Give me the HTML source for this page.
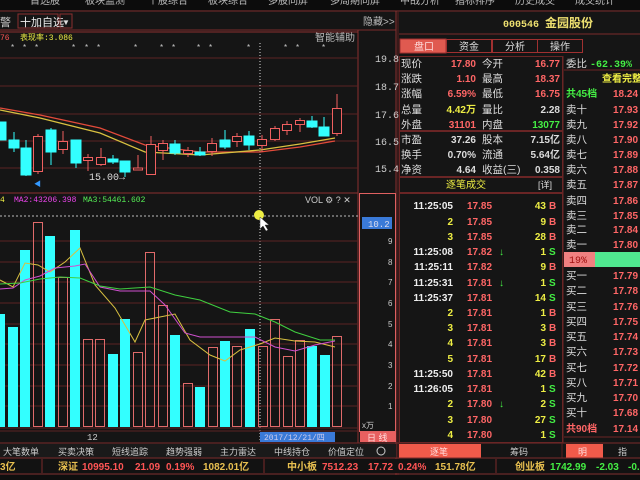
<!DOCTYPE html>
<html><head><meta charset="utf-8"><style>
html,body{margin:0;padding:0;background:#141414;width:640px;height:480px;overflow:hidden}
svg{display:block}
text{font-family:"Liberation Sans","Noto Sans CJK SC",sans-serif}
.m{font-family:"Liberation Mono","Noto Sans CJK SC",monospace}
</style></head><body>
<svg width="640" height="480" viewBox="0 0 640 480" xmlns="http://www.w3.org/2000/svg">
<rect width="640" height="480" fill="#151515"/>
<rect x="0" y="0" width="640" height="10" fill="#0c0c0c"/>
<g fill="#bbb" font-size="10">
<text x="30" y="4">首选股</text><text x="85" y="4">板块监测</text><text x="148" y="4">个股综合</text><text x="208" y="4">板块综合</text><text x="268" y="4">多股同屏</text><text x="330" y="4">多周期同屏</text><text x="400" y="4">中战分析</text><text x="455" y="4">指标排序</text><text x="515" y="4">历史成交</text><text x="575" y="4">成交统计</text>
</g>
<line x1="0" y1="11" x2="640" y2="11" stroke="#7a2a2a"/>
<text x="0" y="26" font-size="11" fill="#ccc">警</text>
<rect x="18" y="14" width="40" height="14" fill="none" stroke="#8a3030"/>
<text x="20" y="26" font-size="11" fill="#eee">十加自选</text>
<rect x="60" y="14" width="12" height="14" fill="none" stroke="#8a3030"/>
<text x="62" y="25" font-size="8" fill="#ddd">▼</text>
<text x="363" y="25" font-size="10" fill="#bbb">隐藏&gt;&gt;</text>
<line x1="0" y1="30" x2="396" y2="30" stroke="#7a2a2a"/>
<rect x="-1" y="32" width="359" height="161" fill="none" stroke="#8a3030"/>
<line x1="358" y1="30" x2="358" y2="443" stroke="#8a3030"/>
<line x1="396" y1="11" x2="396" y2="480" stroke="#8a3030"/>
<line x1="398" y1="11" x2="398" y2="480" stroke="#5a2020"/>
<g stroke="#5a2424" stroke-width="1">
<line x1="0" y1="58" x2="358" y2="58"/><line x1="0" y1="86" x2="358" y2="86"/><line x1="0" y1="114" x2="358" y2="114"/><line x1="0" y1="141" x2="358" y2="141"/><line x1="0" y1="168" x2="358" y2="168"/>
</g>
<g fill="#ccc" font-size="10" class="m">
<text x="375" y="62" class="m">19.8</text><text x="375" y="90" class="m">18.7</text><text x="375" y="118" class="m">17.6</text><text x="375" y="145" class="m">16.5</text><text x="375" y="172" class="m">15.4</text>
</g>
<text x="0" y="40" font-size="8" fill="#f55" class="m">76</text>
<text x="20" y="40" font-size="8" fill="#ee4" class="m">表现率:3.086</text>
<text x="315" y="41" font-size="10" fill="#bbb">智能辅助</text>
<g fill="#ccc" font-size="8">
<text x="11" y="50">*</text><text x="23" y="50">*</text><text x="35" y="50">*</text><text x="72" y="50">*</text><text x="85" y="50">*</text><text x="97" y="50">*</text><text x="134" y="50">*</text><text x="160" y="50">*</text><text x="172" y="50">*</text><text x="197" y="50">*</text><text x="209" y="50">*</text><text x="247" y="50">*</text><text x="284" y="50">*</text><text x="296" y="50">*</text><text x="322" y="50">*</text>
</g>
<line x1="260" y1="43" x2="260" y2="440" stroke="#ddd" stroke-dasharray="1,2"/>
<polyline points="0,108 40,115 100,128 145,145 200,152 260,152 300,147 335,141" fill="none" stroke="#e24a3a" stroke-width="1.3"/>
<polyline points="0,110 40,118 100,133 145,152 200,155 260,150 300,144 335,138" fill="none" stroke="#d8c040" stroke-width="1.3"/>
<g stroke-width="1">
<g fill="#3ff" stroke="#3ff">
<rect x="0" y="122" width="6" height="18"/>
<line x1="14" y1="132" x2="14" y2="152"/><rect x="9" y="140" width="10" height="8"/>
<line x1="26" y1="140" x2="26" y2="176"/><rect x="21" y="148" width="10" height="27"/>
<line x1="51" y1="128" x2="51" y2="165"/><rect x="46" y="130" width="10" height="22"/>
<line x1="76" y1="140" x2="76" y2="168"/><rect x="71" y="140" width="10" height="23"/>
<line x1="113" y1="155" x2="113" y2="164"/><rect x="108" y="159" width="10" height="3"/>
<line x1="125" y1="161" x2="125" y2="177"/><rect x="120" y="161" width="10" height="11"/>
<line x1="175" y1="140" x2="175" y2="155"/><rect x="170" y="144" width="10" height="9"/>
<line x1="200" y1="147" x2="200" y2="156"/><rect x="195" y="152" width="10" height="3"/>
<line x1="225" y1="130" x2="225" y2="149"/><rect x="220" y="140" width="10" height="7"/>
<line x1="249" y1="131" x2="249" y2="150"/><rect x="244" y="136" width="10" height="9"/>
<line x1="312" y1="116" x2="312" y2="128"/><rect x="307" y="121" width="10" height="6"/>
<line x1="324" y1="117" x2="324" y2="136"/><rect x="319" y="127" width="10" height="9"/>
</g>
<g fill="#151515" stroke="#f06060">
<line x1="38" y1="134" x2="38" y2="174"/><rect x="33.5" y="136.5" width="9" height="35"/>
<line x1="63" y1="131" x2="63" y2="154"/><rect x="58.5" y="141.5" width="9" height="8"/>
<line x1="88" y1="154" x2="88" y2="171"/><rect x="83.5" y="157.5" width="9" height="3"/>
<line x1="101" y1="148" x2="101" y2="166"/><rect x="96.5" y="157.5" width="9" height="7"/>
<line x1="138" y1="155" x2="138" y2="170"/><rect x="133.5" y="168" width="9" height="2"/>
<line x1="151" y1="136" x2="151" y2="175"/><rect x="146.5" y="144.5" width="9" height="30"/>
<line x1="163" y1="140" x2="163" y2="160"/><rect x="158.5" y="143.5" width="9" height="7"/>
<line x1="188" y1="147" x2="188" y2="157"/><rect x="183.5" y="150.5" width="9" height="3"/>
<line x1="212" y1="138" x2="212" y2="156"/><rect x="207.5" y="143.5" width="9" height="8"/>
<line x1="237" y1="133" x2="237" y2="147"/><rect x="232.5" y="136.5" width="9" height="5"/>
<line x1="262" y1="135" x2="262" y2="152"/><rect x="257.5" y="139.5" width="9" height="6"/>
<line x1="275" y1="126" x2="275" y2="141"/><rect x="270.5" y="128.5" width="9" height="11"/>
<line x1="287" y1="121" x2="287" y2="135"/><rect x="282.5" y="124.5" width="9" height="6"/>
<line x1="300" y1="118" x2="300" y2="132"/><rect x="295.5" y="120.5" width="9" height="4"/>
<line x1="337" y1="94" x2="337" y2="136"/><rect x="332.5" y="108.5" width="9" height="25"/>
</g>
</g>
<text x="89" y="180" font-size="10" fill="#ddd" class="m">15.00→</text>
<text x="34" y="186" font-size="7" fill="#39f">◀</text>
<line x1="0" y1="193" x2="358" y2="193" stroke="#8a3030"/>
<text x="0" y="202" font-size="8" fill="#ee4" class="m">4</text>
<text x="14" y="202" font-size="8" fill="#e4e" class="m">MA2:43206.398</text>
<text x="83" y="202" font-size="8" fill="#5e5" class="m">MA3:54461.602</text>
<text x="305" y="203" font-size="9" fill="#ccc">VOL ⚙ ? ✕</text>
<line x1="0" y1="216" x2="358" y2="216" stroke="#bbb" stroke-dasharray="2,2"/>
<g stroke="#5a2424">
<line x1="0" y1="241" x2="358" y2="241"/><line x1="0" y1="262" x2="358" y2="262"/><line x1="0" y1="282" x2="358" y2="282"/><line x1="0" y1="303" x2="358" y2="303"/><line x1="0" y1="324" x2="358" y2="324"/><line x1="0" y1="344" x2="358" y2="344"/><line x1="0" y1="365" x2="358" y2="365"/><line x1="0" y1="386" x2="358" y2="386"/><line x1="0" y1="406" x2="358" y2="406"/><line x1="0" y1="428" x2="358" y2="428"/>
</g>
<rect x="359.5" y="193.5" width="36" height="238" fill="none" stroke="#e06060"/>
<rect x="362" y="217" width="30" height="12" fill="#3a7ad8"/>
<text x="368" y="227" font-size="9" fill="#dde" class="m">10.2</text>
<g fill="#ccc" font-size="8" class="m">
<text x="388" y="244">9</text><text x="388" y="265">8</text><text x="388" y="285">7</text><text x="388" y="306">6</text><text x="388" y="327">5</text><text x="388" y="347">4</text><text x="388" y="368">3</text><text x="388" y="389">2</text><text x="388" y="409">1</text>
</g>
<text x="362" y="428" font-size="8" fill="#ccc">x万</text>
<g fill="#3ff">
<rect x="0" y="314" width="5" height="113"/><rect x="8" y="327" width="10" height="100"/><rect x="20" y="250" width="10" height="177"/><rect x="45" y="236" width="10" height="191"/><rect x="70" y="230" width="10" height="197"/><rect x="108" y="354" width="10" height="73"/><rect x="120" y="319" width="10" height="108"/><rect x="170" y="335" width="10" height="92"/><rect x="195" y="387" width="10" height="40"/><rect x="220" y="341" width="10" height="86"/><rect x="245" y="329" width="10" height="98"/><rect x="307" y="346" width="10" height="81"/><rect x="320" y="355" width="10" height="72"/>
</g>
<g fill="none" stroke="#e06a6a">
<rect x="33.5" y="222.5" width="9" height="204"/><rect x="58.5" y="277.5" width="9" height="149"/><rect x="83.5" y="339.5" width="9" height="87"/><rect x="95.5" y="339.5" width="9" height="87"/><rect x="133.5" y="352.5" width="9" height="74"/><rect x="145.5" y="252.5" width="9" height="174"/><rect x="158.5" y="305.5" width="9" height="121"/><rect x="183.5" y="383.5" width="9" height="43"/><rect x="208.5" y="347.5" width="9" height="79"/><rect x="232.5" y="346.5" width="9" height="80"/><rect x="258.5" y="346.5" width="9" height="80"/><rect x="270.5" y="319.5" width="9" height="107"/><rect x="283.5" y="356.5" width="9" height="70"/><rect x="295.5" y="340.5" width="9" height="86"/><rect x="332.5" y="336.5" width="9" height="90"/>
</g>
<polyline points="0,280 13,287 25,263 38,265 50,272 65,262 80,248 95,285 115,308 135,342 145,320 165,316 175,314 190,340 210,355 225,361 240,350 260,344 275,338 295,341 315,342 335,347" fill="none" stroke="#d8c040"/>
<polyline points="0,289 13,288 25,280 40,276 55,268 75,266 85,264 100,287 120,291 150,291 165,305 185,333 200,337 230,337 255,337 275,347 295,351 315,345 335,341" fill="none" stroke="#d050d0"/>
<polyline points="0,284 20,283 40,279 60,277 80,278 100,286 120,289 150,287 175,295 200,300 230,312 255,314 275,322 295,332 320,340 335,340" fill="none" stroke="#40d040"/>
<circle cx="259" cy="215" r="5" fill="#ee4"/>
<path d="M260,217 l0,12 l3,-3 l3,5 l2,-1 l-3,-5 l4,0 z" fill="#fff" stroke="#333" stroke-width="0.5"/>
<line x1="0" y1="431" x2="358" y2="431" stroke="#5a2424"/>
<text x="87" y="440" font-size="9" fill="#ccc" class="m">12</text>
<rect x="260" y="432" width="75" height="10" fill="#3a7ad8"/>
<text x="264" y="440" font-size="8" fill="#cce" class="m">2017/12/21/四</text>
<rect x="360" y="432" width="36" height="10" fill="#e86060"/>
<text x="367" y="441" font-size="9" fill="#fdd">日 线</text>
<line x1="0" y1="443" x2="640" y2="443" stroke="#7a2a2a"/>
<rect x="0" y="444" width="396" height="14" fill="#1a1a1a"/>
<g font-size="9" fill="#ccc">
<text x="3" y="455">大笔数单</text><text x="58" y="455">买卖决策</text><text x="112" y="455">短线追踪</text><text x="166" y="455">趋势强弱</text><text x="220" y="455">主力雷达</text><text x="274" y="455">中线持仓</text><text x="328" y="455">价值定位</text>
</g>
<circle cx="381" cy="451" r="4" fill="none" stroke="#ccc"/>
<rect x="399" y="444" width="82" height="14" fill="#f05a4a"/>
<text x="430" y="455" font-size="9" fill="#fdd">逐笔</text>
<text x="510" y="455" font-size="9" fill="#ccc">筹码</text>
<line x1="562" y1="443" x2="562" y2="458" stroke="#5a2020"/>
<rect x="566" y="444" width="37" height="14" fill="#f05a4a"/>
<text x="578" y="455" font-size="9" fill="#fdd">明</text>
<text x="618" y="455" font-size="9" fill="#ccc">指</text>
<line x1="0" y1="458" x2="640" y2="458" stroke="#7a2a2a"/>
<rect x="0" y="459" width="640" height="14" fill="#121212"/>
<g font-size="10" font-weight="bold" class="m">
<text x="0" y="470" fill="#e8c050">3亿</text>
<line x1="42" y1="459" x2="42" y2="473" stroke="#7a2a2a"/>
<text x="58" y="470" fill="#e8c050">深证</text>
<text x="82" y="470" fill="#f55">10995.10</text>
<text x="135" y="470" fill="#f55">21.09</text>
<text x="166" y="470" fill="#f55">0.19%</text>
<text x="203" y="470" fill="#e8c050">1082.01亿</text>
<line x1="264" y1="459" x2="264" y2="473" stroke="#7a2a2a"/>
<text x="287" y="470" fill="#e8c050">中小板</text>
<text x="322" y="470" fill="#f55">7512.23</text>
<text x="368" y="470" fill="#f55">17.72</text>
<text x="398" y="470" fill="#f55">0.24%</text>
<text x="435" y="470" fill="#e8c050">151.78亿</text>
<line x1="496" y1="459" x2="496" y2="473" stroke="#7a2a2a"/>
<text x="515" y="470" fill="#e8c050">创业板</text>
<text x="550" y="470" fill="#4e4">1742.99</text>
<text x="596" y="470" fill="#4e4">-2.03</text>
<text x="628" y="470" fill="#4e4">-0.</text>
</g>
<line x1="0" y1="474" x2="640" y2="474" stroke="#7a2a2a"/>
<rect x="0" y="475" width="640" height="5" fill="#0e0e0e"/>
<rect x="399" y="14" width="241" height="20" fill="#151515"/>
<text x="503" y="27" font-size="10" fill="#eee070" font-weight="bold" class="m">000546</text>
<text x="545" y="27" font-size="12" fill="#eee070" font-weight="bold">金园股份</text>
<line x1="399" y1="34" x2="640" y2="34" stroke="#7a2a2a"/>
<rect x="400" y="39" width="46" height="14" fill="#e05a50" stroke="#a03030"/>
<rect x="446.5" y="39.5" width="45" height="13" fill="none" stroke="#a03030"/>
<rect x="492.5" y="39.5" width="45" height="13" fill="none" stroke="#a03030"/>
<rect x="537.5" y="39.5" width="45" height="13" fill="none" stroke="#a03030"/>
<g font-size="10"><text x="414" y="50" fill="#fdd">盘口</text><text x="459" y="50" fill="#ddd">资金</text><text x="505" y="50" fill="#ddd">分析</text><text x="550" y="50" fill="#ddd">操作</text></g>
<rect x="399.5" y="56.5" width="163" height="74" fill="none" stroke="#6a2525"/>
<rect x="399.5" y="131.5" width="163" height="45" fill="none" stroke="#6a2525"/>
<rect x="399.5" y="177.5" width="163" height="15" fill="none" stroke="#6a2525"/>
<g font-size="10.5" fill="#ddd">
<text x="401" y="67">现价</text><text x="401" y="82">涨跌</text><text x="401" y="97">涨幅</text><text x="401" y="113">总量</text><text x="401" y="128">外盘</text>
<text x="401" y="143">市盈</text><text x="401" y="158">换手</text><text x="401" y="173">净资</text>
<text x="482" y="67">今开</text><text x="482" y="82">最高</text><text x="482" y="97">最低</text><text x="482" y="113">量比</text><text x="482" y="128">内盘</text>
<text x="482" y="143">股本</text><text x="482" y="158">流通</text><text x="482" y="173">收益(三)</text>
</g>
<g font-size="10" font-weight="bold" text-anchor="end" class="m">
<text x="476" y="67" fill="#f66">17.80</text><text x="476" y="82" fill="#f66">1.10</text><text x="476" y="97" fill="#f66">6.59%</text><text x="476" y="113" fill="#ee4">4.42万</text><text x="476" y="128" fill="#f66">31101</text>
<text x="476" y="143" fill="#ddd">37.26</text><text x="476" y="158" fill="#ddd">0.70%</text><text x="476" y="173" fill="#ddd">4.64</text>
<text x="560" y="67" fill="#f66">16.77</text><text x="560" y="82" fill="#f66">18.37</text><text x="560" y="97" fill="#f66">16.75</text><text x="560" y="113" fill="#ddd">2.28</text><text x="560" y="128" fill="#4e4">13077</text>
<text x="560" y="143" fill="#ddd">7.15亿</text><text x="560" y="158" fill="#ddd">5.64亿</text><text x="560" y="173" fill="#ddd">0.358</text>
</g>
<text x="446" y="188" font-size="10" fill="#ee4">逐笔成交</text>
<text x="538" y="188" font-size="9" fill="#ddd">[详]</text>
<rect x="399.5" y="193.5" width="163" height="249" fill="none" stroke="#6a2525"/>
<g font-size="10" font-weight="bold" class="m">
<g fill="#eee" text-anchor="end">
<text x="453" y="209">11:25:05</text><text x="453" y="255">11:25:08</text><text x="453" y="270">11:25:11</text><text x="453" y="286">11:25:31</text><text x="453" y="301">11:25:37</text><text x="453" y="377">11:25:50</text><text x="453" y="392">11:26:05</text>
</g>
<g fill="#ee4" text-anchor="end">
<text x="453" y="225">2</text><text x="453" y="240">3</text><text x="453" y="316">2</text><text x="453" y="331">3</text><text x="453" y="346">4</text><text x="453" y="362">5</text><text x="453" y="407">2</text><text x="453" y="423">3</text><text x="453" y="438">4</text>
</g>
<g fill="#f66">
<text x="467" y="209">17.85</text><text x="467" y="225">17.85</text><text x="467" y="240">17.85</text><text x="467" y="255">17.82</text><text x="467" y="270">17.82</text><text x="467" y="286">17.81</text><text x="467" y="301">17.81</text><text x="467" y="316">17.81</text><text x="467" y="331">17.81</text><text x="467" y="346">17.81</text><text x="467" y="362">17.81</text><text x="467" y="377">17.81</text><text x="467" y="392">17.81</text><text x="467" y="407">17.80</text><text x="467" y="423">17.80</text><text x="467" y="438">17.80</text>
</g>
<g fill="#4e4"><text x="499" y="255">↓</text><text x="499" y="286">↓</text><text x="499" y="407">↓</text></g>
<g fill="#ee4" text-anchor="end">
<text x="546" y="209">43</text><text x="546" y="225">9</text><text x="546" y="240">28</text><text x="546" y="255">1</text><text x="546" y="270">9</text><text x="546" y="286">1</text><text x="546" y="301">14</text><text x="546" y="316">1</text><text x="546" y="331">3</text><text x="546" y="346">3</text><text x="546" y="362">17</text><text x="546" y="377">42</text><text x="546" y="392">1</text><text x="546" y="407">2</text><text x="546" y="423">27</text><text x="546" y="438">1</text>
</g>
<g fill="#f66"><text x="549" y="209">B</text><text x="549" y="225">B</text><text x="549" y="240">B</text><text x="549" y="270">B</text><text x="549" y="316">B</text><text x="549" y="331">B</text><text x="549" y="346">B</text><text x="549" y="362">B</text><text x="549" y="377">B</text></g>
<g fill="#4e4"><text x="549" y="255">S</text><text x="549" y="286">S</text><text x="549" y="301">S</text><text x="549" y="392">S</text><text x="549" y="407">S</text><text x="549" y="423">S</text><text x="549" y="438">S</text></g>
</g>
<line x1="563" y1="56" x2="563" y2="443" stroke="#6a2525"/>
<line x1="564" y1="70" x2="640" y2="70" stroke="#6a2525"/>
<text x="566" y="67" font-size="10.5" fill="#ddd">委比</text>
<text x="590" y="67" font-size="10" font-weight="bold" fill="#4e4" class="m">-62.39%</text>
<text x="602" y="82" font-size="10" font-weight="bold" fill="#ee4">查看完整</text>
<text x="566" y="97" font-size="10" font-weight="bold" fill="#4e4">共45档</text>
<g font-size="10.5" fill="#ddd">
<text x="566" y="113">卖十</text><text x="566" y="128">卖九</text><text x="566" y="143">卖八</text><text x="566" y="158">卖七</text><text x="566" y="173">卖六</text><text x="566" y="188">卖五</text><text x="566" y="204">卖四</text><text x="566" y="219">卖三</text><text x="566" y="233">卖二</text><text x="566" y="248">卖一</text>
<text x="566" y="279">买一</text><text x="566" y="294">买二</text><text x="566" y="310">买三</text><text x="566" y="325">买四</text><text x="566" y="340">买五</text><text x="566" y="355">买六</text><text x="566" y="371">买七</text><text x="566" y="386">买八</text><text x="566" y="401">买九</text><text x="566" y="416">买十</text>
</g>
<text x="566" y="432" font-size="10" font-weight="bold" fill="#f66">共90档</text>
<g font-size="10" font-weight="bold" fill="#f66" class="m">
<text x="613" y="97">18.24</text><text x="613" y="113">17.93</text><text x="613" y="128">17.92</text><text x="613" y="143">17.90</text><text x="613" y="158">17.89</text><text x="613" y="173">17.88</text><text x="613" y="188">17.87</text><text x="613" y="204">17.86</text><text x="613" y="219">17.85</text><text x="613" y="233">17.84</text><text x="613" y="248">17.80</text>
<text x="613" y="279">17.79</text><text x="613" y="294">17.78</text><text x="613" y="310">17.76</text><text x="613" y="325">17.75</text><text x="613" y="340">17.74</text><text x="613" y="355">17.73</text><text x="613" y="371">17.72</text><text x="613" y="386">17.71</text><text x="613" y="401">17.70</text><text x="613" y="416">17.68</text><text x="613" y="432">17.14</text>
</g>
<rect x="564" y="252" width="31" height="15" fill="#f08080"/>
<rect x="595" y="252" width="45" height="15" fill="#50e890"/>
<text x="569" y="263" font-size="10" fill="#a01010" class="m">19%</text>
<line x1="564" y1="437" x2="640" y2="437" stroke="#6a2525"/>
</svg>
</body></html>
